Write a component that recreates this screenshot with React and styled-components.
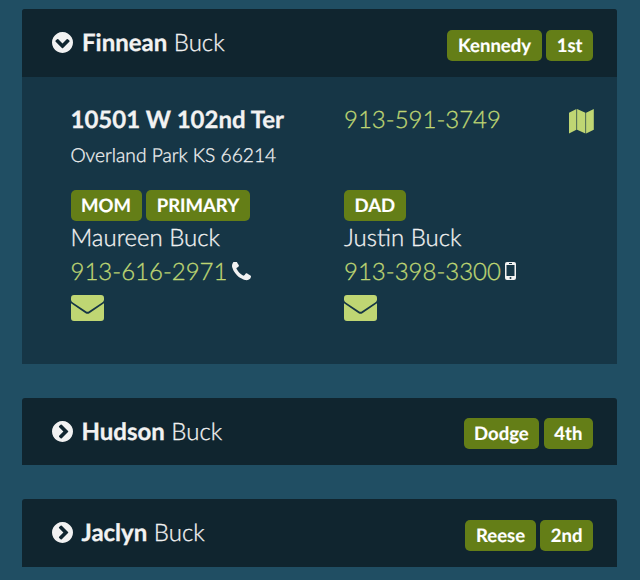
import React, { useState } from "react";
import styled, { createGlobalStyle } from "styled-components";

const GlobalStyle = createGlobalStyle`
  * {
    box-sizing: border-box;
  }
  body {
    margin: 0;
    background: #204e63;
    color: #f2f2f2;
    font-family: Lato, "Liberation Sans", sans-serif;
    font-weight: 300;
    text-rendering: geometricPrecision;
    -webkit-text-stroke: 0.3px;
    overflow: hidden;
  }
`;

const Directory = styled.main`
  display: flex;
  flex-direction: column;
  gap: 34px;
  padding: 9px 23px 13px 22px;
`;

const Card = styled.section`
  border-radius: 3px 3px 0 0;
  overflow: hidden;
  background: #163646;
`;

const CardHeader = styled.header`
  display: flex;
  align-items: center;
  height: ${({ $open }) => ($open ? "68px" : "67.4px")};
  padding: 0 24px 0 ${({ $open }) => ($open ? "30px" : "29.5px")};
  background: #10252f;
`;

const Toggle = styled.button`
  display: flex;
  padding: 0;
  margin-right: 9px;
  margin-top: -1px;
  border: 0;
  background: transparent;
  color: inherit;
`;

const StudentName = styled.h2`
  flex: 1;
  margin: 0;
  font-size: 24px;
  line-height: 30px;
  font-weight: 300;
  white-space: nowrap;
`;

const Strong = styled.strong`
  font-weight: 700;
`;

const Tags = styled.div`
  display: flex;
  gap: 4.5px;
  padding-top: ${({ $header }) => ($header ? "4px" : "0")};
`;

const Tag = styled.span`
  height: 31px;
  padding: 0 10.6px;
  border-radius: 5px;
  background: #647e17;
  color: #fff;
  font-size: 18.5px;
  font-weight: 700;
  line-height: 30px;
  white-space: nowrap;
  -webkit-text-stroke: 0.15px;
`;

const CardBody = styled.div`
  display: grid;
  grid-template-columns: 273.5px 1fr auto;
  grid-template-rows: 89px auto;
  height: 287px;
  padding: 24.5px 23.5px 0 48.5px;
`;

const Line = styled.div`
  display: flex;
  align-items: center;
  height: 34px;
  font-size: 24px;
  font-weight: ${({ $bold }) => ($bold ? 700 : 300)};
  white-space: nowrap;
`;

const Address = styled.div`
  padding-top: 1px;
`;

const City = styled.div`
  padding-top: 5px;
  font-size: 19.2px;
  line-height: 28px;
`;

const Contact = styled.div`
  margin-top: -0.5px;
`;

const ContactLines = styled.div`
  margin-top: -1px;
`;

const PhoneLink = styled.a`
  margin-right: 4.5px;
  color: #bfd673;
`;

const IconLink = styled.a`
  display: flex;
  color: #bfd673;
  padding-top: ${({ $top }) => $top}px;
`;

const Icon = ({ width, height, viewBox, children }) => (
  <svg width={width} height={height} viewBox={viewBox} fill="currentColor" aria-hidden="true">
    {children}
  </svg>
);

const ChevronIcon = ({ open }) => (
  <Icon width="21" height="21" viewBox="128 128 1536 1536">
    <path
      transform={open ? "rotate(90 896 896)" : undefined}
      d="M845 1395l454-454q19-19 19-45t-19-45l-454-454q-19-19-45-19t-45 19l-102 102q-19 19-19 45t19 45l307 307-307 307q-19 19-19 45t19 45l102 102q19 19 45 19t45-19zm819-499q0 209-103 385.5t-279.5 279.5-385.5 103-385.5-103-279.5-279.5-103-385.5 103-385.5 279.5-279.5 385.5-103 385.5 103 279.5 279.5 103 385.5z"
    />
  </Icon>
);

const MapIcon = () => (
  <Icon width="25" height="25" viewBox="0 0 25 25">
    <path d="M0 3.7L7.4 0v20.7L0 24.4zM8.1 0l8.3 3.7v20.7l-8.3-3.7zM17.1 3.7L24.8 0v20.7l-7.7 3.7z" />
  </Icon>
);

const EnvelopeIcon = () => (
  <Icon width="33" height="26" viewBox="0 0 33 26">
    <path d="M3 0h27q3 0 3 3v1.8q0 1.500-1.800 2.700L18 16.200q-1.500 1-3 0L1.800 7.500Q0 6.300 0 4.800V3q0-3 3-3z" />
    <path d="M0 8.200l14.600 10q1.900 1.200 3.800 0L33 8.200V23q0 3-3 3H3q-3 0-3-3z" />
  </Icon>
);

const HandsetIcon = () => (
  <Icon width="19" height="19" viewBox="192 192 1408 1408">
    <path
      d="M1600 1240q0 27-10 70.5t-21 68.5q-21 50-122 106-94 51-186 51-27 0-52.5-3.5t-57.5-12.5-47.5-14.5-55.5-20.5-49-18q-98-35-175-83-128-79-264.5-215.5t-215.5-264.5q-48-77-83-175-3-9-18-49t-20.5-55.5-14.5-47.5-12.5-57.5-3.5-52.5q0-92 51-186 56-101 106-122 25-11 68.5-21t70.5-10q14 0 21 3 18 6 53 76 11 19 30 54t35 63.5 31 53.5q3 4 17.5 25t21.5 35.5 7 28.5q0 20-28.5 50t-62 55-62 53-28.5 46q0 9 5 22.5t8.5 20.5 14 24 11.5 19q76 137 174 235t235 174q2 1 19 11.5t24 14 20.5 8.5 22.5 5q18 0 46-28.5t53-62 55-62 50-28.5q14 0 28.5 7t35.5 21.5 25 17.5q25 15 53.5 31t63.5 35 54 30q70 35 76 53 3 7 3 21z"
    />
  </Icon>
);

const MobileIcon = () => (
  <Icon width="11" height="18" viewBox="0 0 11 18">
    <path
      fillRule="evenodd"
      d="M2 0h7q2 0 2 2v14q0 2-2 2H2q-2 0-2-2V2Q0 0 2 0zM1.5 3v11h8V3zM4 1.1v.8h3v-.8zM4.5 16a1 1 0 1 0 2 0 1 1 0 1 0-2 0z"
    />
  </Icon>
);

const students = [
  { first: "Finnean", last: "Buck", tags: ["Kennedy", "1st"] },
  { first: "Hudson", last: "Buck", tags: ["Dodge", "4th"] },
  { first: "Jaclyn", last: "Buck", tags: ["Reese", "2nd"] },
];

const parents = [
  { name: "Maureen Buck", tags: ["MOM", "PRIMARY"], phone: "913-616-2971", mobile: false },
  { name: "Justin Buck", tags: ["DAD"], phone: "913-398-3300", mobile: true },
];

const TagList = ({ tags, header }) => (
  <Tags $header={header}>
    {tags.map((tag) => (
      <Tag key={tag}>{tag}</Tag>
    ))}
  </Tags>
);

const Parent = ({ name, tags, phone, mobile }) => (
  <Contact>
    <TagList tags={tags} />
    <ContactLines>
      <Line>{name}</Line>
      <Line>
        <PhoneLink>{phone}</PhoneLink>
        {mobile ? <MobileIcon /> : <HandsetIcon />}
      </Line>
    </ContactLines>
    <IconLink $top={7} aria-label={`Email ${name}`}>
      <EnvelopeIcon />
    </IconLink>
  </Contact>
);

const Details = () => (
  <CardBody>
    <Address>
      <Line $bold>10501 W 102nd Ter</Line>
      <City>Overland Park KS 66214</City>
    </Address>
    <Address>
      <Line>
        <PhoneLink>913-591-3749</PhoneLink>
      </Line>
    </Address>
    <IconLink $top={7.5} aria-label="Map">
      <MapIcon />
    </IconLink>
    {parents.map((parent) => (
      <Parent key={parent.name} {...parent} />
    ))}
  </CardBody>
);

const App = () => {
  const [openName, setOpenName] = useState("Finnean");

  return (
    <>
      <GlobalStyle />
      <Directory>
        {students.map(({ first, last, tags }) => {
          const open = first === openName;
          return (
            <Card key={first}>
              <CardHeader $open={open}>
                <Toggle
                  type="button"
                  onClick={() => setOpenName(open ? null : first)}
                  aria-label={`Toggle ${first}`}
                >
                  <ChevronIcon open={open} />
                </Toggle>
                <StudentName>
                  <Strong>{first}</Strong> {last}
                </StudentName>
                <TagList tags={tags} header />
              </CardHeader>
              {open && <Details />}
            </Card>
          );
        })}
      </Directory>
    </>
  );
};

export default App;
